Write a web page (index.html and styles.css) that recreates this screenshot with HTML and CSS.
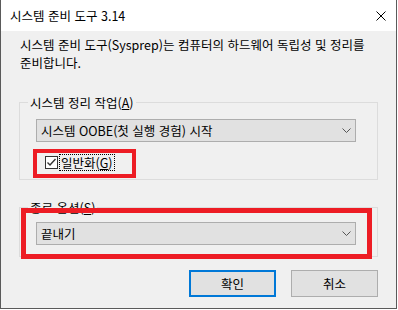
FILE: index.html
```html
<!DOCTYPE html>
<html lang="ko">
<head>
    <meta charset="UTF-8">
    <title>시스템 준비 도구 3.14</title>
    <link rel="stylesheet" href="styles.css">
</head>
<body>
    <div class="window">
        <div class="titlebar">
            <span class="title">시스템 준비 도구 3.14</span>
            <svg class="close" width="10" height="10" viewBox="0 0 10 10">
                <path d="M0.5 0.5 L9.5 9.5 M9.5 0.5 L0.5 9.5" stroke="#000" stroke-width="1" fill="none"/>
            </svg>
        </div>

        <p class="desc">시스템 준비 도구(Sysprep)는 컴퓨터의 하드웨어 독립성 및 정리를<br>준비합니다.</p>

        <fieldset class="group group-cleanup">
            <legend>시스템 정리 작업(<u>A</u>)</legend>
            <div class="combo">
                <span>시스템 OOBE(첫 실행 경험) 시작</span>
                <svg class="chevron" width="9" height="5" viewBox="0 0 9 5">
                    <polyline points="0.5,0.5 4.5,4.5 8.5,0.5" stroke="#555" stroke-width="1" fill="none"/>
                </svg>
            </div>
            <div class="check-row">
                <span class="checkbox">
                    <svg width="11" height="11" viewBox="0 0 11 11">
                        <polyline points="1.5,5.5 4,8 9.5,2" stroke="#333" stroke-width="1.4" fill="none"/>
                    </svg>
                </span>
                <span class="check-label">일반화(<u>G</u>)</span>
            </div>
        </fieldset>

        <fieldset class="group group-shutdown">
            <legend>종료 옵션(<u>S</u>)</legend>
            <div class="combo">
                <span>끝내기</span>
                <svg class="chevron" width="9" height="5" viewBox="0 0 9 5">
                    <polyline points="0.5,0.5 4.5,4.5 8.5,0.5" stroke="#555" stroke-width="1" fill="none"/>
                </svg>
            </div>
        </fieldset>

        <div class="buttons">
            <button class="btn btn-default">확인</button>
            <button class="btn">취소</button>
        </div>

        <!-- 빨간 강조 표시 -->
        <div class="mark mark-check"></div>
        <div class="mark mark-shutdown"></div>
    </div>
</body>
</html>
```

FILE: styles.css
```css
body {
    margin: 0;
    background: #fff;
    font-family: "Noto Sans CJK KR", "Noto Sans", sans-serif;
    font-size: 12.5px;
    color: #000;
}

.window {
    position: relative;
    box-sizing: border-box;
    width: 397px;
    height: 309px;
    background-color: #f0f0f0;
    border: 1px solid #5a5a5a;
    border-top: none;
}

.titlebar {
    display: flex;
    align-items: center;
    height: 31px;
    padding-left: 9px;
    background-color: #fff;
}

.title {
    line-height: 17px;
}

.close {
    margin-left: auto;
    margin-right: 10px;
}

.desc {
    margin: 5px 0 0 19px;
    line-height: 18px;
}

.group {
    margin: 0 18px;
    padding: 0;
    border: 1px solid #dcdcdc;
    min-width: 0;
}

.group legend {
    margin-left: 8px;
    padding: 0 2px;
    line-height: 17px;
}

.group-cleanup {
    margin-top: 22px;
    padding-bottom: 8px;
}

.group-shutdown {
    margin-top: 19px;
    padding-bottom: 11px;
}

.combo {
    display: flex;
    align-items: center;
    box-sizing: border-box;
    width: 320px;
    height: 23px;
    margin: 8px 0 0 16px;
    padding: 0 4px;
    background-color: #e1e1e1;
    border: 1px solid #adadad;
    line-height: 17px;
}

.group-shutdown .combo {
    margin-top: 6px;
}

.chevron {
    margin-left: auto;
}

.check-row {
    display: flex;
    align-items: center;
    height: 17px;
    margin: 12px 0 0 25px;
}

.checkbox {
    display: flex;
    align-items: center;
    justify-content: center;
    box-sizing: border-box;
    width: 13px;
    height: 13px;
    background-color: #fff;
    border: 1px solid #333;
}

.check-label {
    margin-left: 2px;
    padding: 0 1px;
    line-height: 15px;
    outline: 1px dotted #000;
}

.buttons {
    display: flex;
    justify-content: flex-end;
    gap: 15px;
    margin: 13px 18px 0 0;
}

.btn {
    box-sizing: border-box;
    width: 87px;
    height: 27px;
    padding: 0;
    font-family: inherit;
    font-size: 12.5px;
    color: #000;
    background-color: #e1e1e1;
    border: 1px solid #adadad;
}

.btn-default {
    border: 2px solid #0078d7;
}

.mark {
    position: absolute;
    box-sizing: border-box;
    border: 4px solid #ed1c24;
}

.mark-check {
    left: 32px;
    top: 149px;
    width: 103px;
    height: 29px;
}

.mark-shutdown {
    left: 20px;
    top: 208px;
    width: 351px;
    height: 51px;
    border-width: 5px;
}
```
